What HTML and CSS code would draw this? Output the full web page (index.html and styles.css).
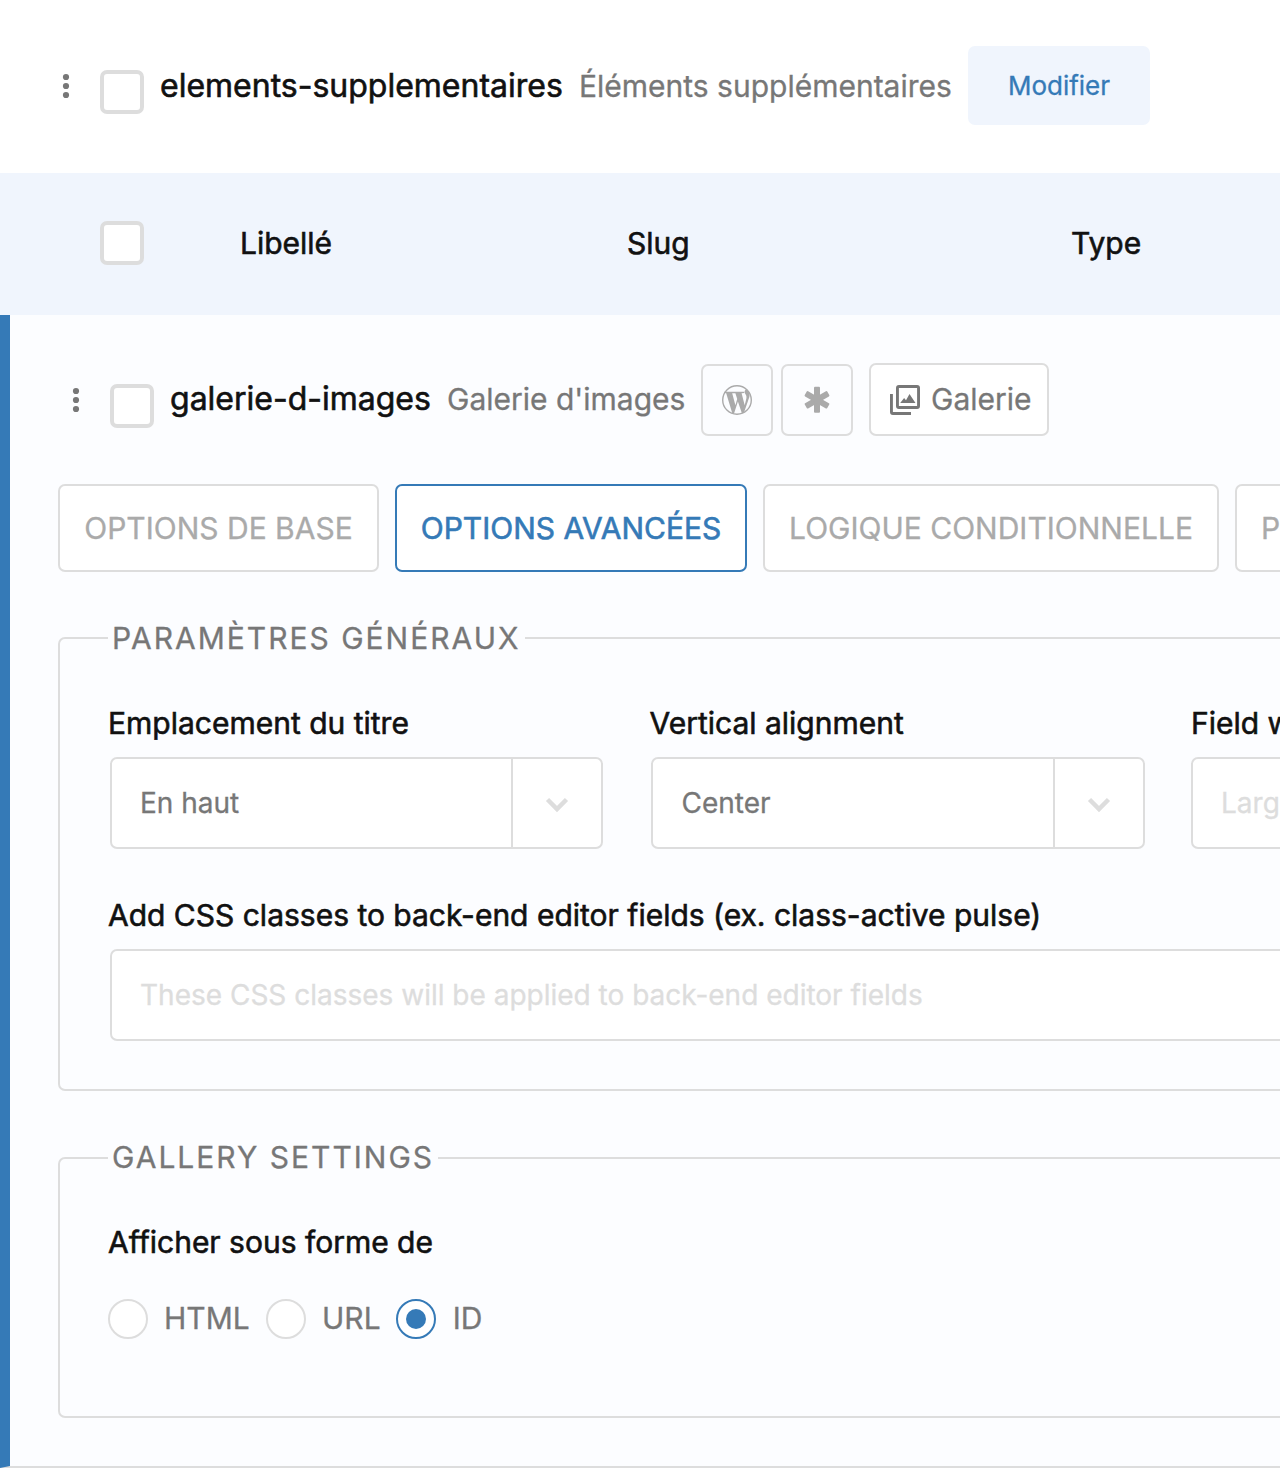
FILE: index.html
```html
<!DOCTYPE html>
<html lang="fr">
<head>
<meta charset="utf-8">
<title>Champs personnalisés</title>
<link rel="stylesheet" href="styles.css">
</head>
<body>
<main class="page">
  <header class="row group-row">
    <svg class="handle" viewBox="0 0 8 26"><circle cx="4" cy="4" r="3.1"/><circle cx="4" cy="13" r="3.1"/><circle cx="4" cy="22" r="3.1"/></svg>
    <span class="checkbox"></span>
    <strong class="name name-group">elements-supplementaires</strong>
    <span class="label label-group">Éléments supplémentaires</span>
    <button class="edit">Modifier</button>
  </header>

  <div class="columns">
    <span class="checkbox"></span>
    <span class="col col-label">Libellé</span>
    <span class="col col-slug">Slug</span>
    <span class="col">Type</span>
  </div>

  <section class="field">
    <div class="row field-row">
      <svg class="handle" viewBox="0 0 8 26"><circle cx="4" cy="4" r="3.1"/><circle cx="4" cy="13" r="3.1"/><circle cx="4" cy="22" r="3.1"/></svg>
      <span class="checkbox"></span>
      <strong class="name name-field">galerie-d-images</strong>
      <span class="label label-field">Galerie d'images</span>
      <span class="chip">
        <svg width="30" height="30" viewBox="0 0 30 30" fill="currentColor"><circle cx="15" cy="15" r="14.3" fill="none" stroke="currentColor" stroke-width="1.4"/><path d="M2.4 6.7H12.8V7.9L10.2 8.3 13.4 20.3 15.2 14 13.4 8.3 11.8 7.9V6.7H22.2V7.9L19.6 8.3 22.7 20.3 24.3 13.8C24.9 11.3 24 10 23.2 8.8 22 6.8 22.8 4.6 25 4.6 26.2 5.6 27.6 8.4 27.6 10.2 27.6 12 26.6 14 26 16L21.8 28H19.8L15.9 16.6 12.2 28H10.2L4.2 8.3 2.4 7.9Z"/></svg>
      </span>
      <span class="chip chip-star">
        <svg width="30" height="30" viewBox="0 0 30 30" fill="currentColor"><rect x="12" y="1.8" width="6" height="26" rx="1"/><rect x="12" y="1.8" width="6" height="26" rx="1" transform="rotate(60 15 14.8)"/><rect x="12" y="1.8" width="6" height="26" rx="1" transform="rotate(-60 15 14.8)"/></svg>
      </span>
      <span class="type">
        <svg width="30" height="30" viewBox="0 0 30 30" fill="none" stroke="currentColor" stroke-width="2.9"><rect x="7.45" y="1.45" width="21.1" height="21.1" rx="1.5"/><path d="M1.45 9V27.1Q1.45 28.55 2.9 28.55H21"/><path d="M10.2 17.9l3.9-4.8 1.9 2.2 3.5-6.3 6 8.9z" fill="currentColor" stroke="none"/></svg>
        <span class="type-name">Galerie</span>
      </span>
    </div>

    <nav class="tabs">
      <button class="tab tab-1">OPTIONS DE BASE</button>
      <button class="tab tab-2 active">OPTIONS AVANCÉES</button>
      <button class="tab tab-3">LOGIQUE CONDITIONNELLE</button>
      <button class="tab tab-4">PERMISSIONS</button>
    </nav>

    <fieldset class="panel general">
      <legend class="legend-general">PARAMÈTRES GÉNÉRAUX</legend>
      <div class="grid">
        <div class="cell">
          <span class="title">Emplacement du titre</span>
          <div class="control"><span class="value">En haut</span><span class="arrow"><svg width="24" height="18" viewBox="0 0 24 18"><path d="M2.5 4.5l9.5 9.5 9.5-9.5"/></svg></span></div>
        </div>
        <div class="cell cell-align">
          <span class="title">Vertical alignment</span>
          <div class="control"><span class="value">Center</span><span class="arrow"><svg width="24" height="18" viewBox="0 0 24 18"><path d="M2.5 4.5l9.5 9.5 9.5-9.5"/></svg></span></div>
        </div>
        <div class="cell cell-width">
          <span class="title">Field width</span>
          <div class="control"><span class="value hint">Largeur</span></div>
        </div>
      </div>
      <div class="cell css-cell">
        <span class="title">Add CSS classes to back-end editor fields (ex. class-active pulse)</span>
        <div class="control"><span class="value hint">These CSS classes will be applied to back-end editor fields</span></div>
      </div>
    </fieldset>

    <fieldset class="panel gallery">
      <legend class="legend-gallery">GALLERY SETTINGS</legend>
      <span class="title">Afficher sous forme de</span>
      <div class="radios">
        <label class="option option-html"><span class="radio"></span><span class="option-name">HTML</span></label>
        <label class="option option-url"><span class="radio"></span><span class="option-name">URL</span></label>
        <label class="option"><span class="radio checked"></span><span class="option-name">ID</span></label>
      </div>
    </fieldset>
  </section>
</main>
</body>
</html>
```
FILE: styles.css
```css
* { box-sizing: border-box; }
body {
  margin: 0;
  background: #fff;
  color: #777;
  font: 30px/38px Inter, "Liberation Sans", sans-serif;
  -webkit-text-stroke: .3px currentColor;
}
.page { width: 1280px; height: 1470px; overflow: hidden; }
svg { display: block; flex: none; }
button { font: inherit; margin: 0; }

.row { display: flex; align-items: center; white-space: nowrap; }
.group-row { height: 173px; padding: 0 0 2px 62px; }
.handle { width: 8px; height: 26px; fill: #777; }
.checkbox {
  flex: none;
  width: 44px;
  height: 44px;
  border: 4px solid #ddd;
  border-radius: 7px;
  background: #fff;
}
.row .checkbox { margin: 12px 16px 0 30px; }
.name, .col, .title {
  color: #111;
  font-weight: 400;
  -webkit-text-stroke: .6px #111;
}
.name { font-size: 32px; }
.name-group { width: 419px; }
.name-field { width: 277px; }
.label-group { width: 389px; }
.label-field { width: 254px; }
.field-row .name, .field-row .label, .type-name { padding-bottom: 2px; }
.edit {
  width: 182px;
  height: 79px;
  border: 0;
  border-radius: 7px;
  background: #f0f5fd;
  color: #357ab7;
  font-size: 26px;
}

.columns {
  display: flex;
  align-items: center;
  height: 142px;
  padding: 0 0 2px 100px;
  background: #f0f5fd;
}
.col-label { width: 387px; margin-left: 96px; }
.col-slug { width: 444px; }

.field {
  height: 1153px;
  border-left: 10px solid #357ab7;
  border-bottom: 2px solid #ddd;
  background: #fcfdff;
}
.field-row { height: 169px; padding-left: 62px; }
.chip {
  display: grid;
  place-items: center;
  flex: none;
  width: 72px;
  height: 72px;
  border: 2px solid #ddd;
  border-radius: 7px;
  color: #aaa;
}
.chip-star { margin: 0 16px 0 8px; }
.type {
  display: flex;
  align-items: center;
  gap: 11px;
  flex: none;
  width: 180px;
  height: 73px;
  padding-left: 19px;
  border: 2px solid #ddd;
  border-radius: 7px;
  background: #fff;
}

.tabs { display: flex; gap: 16px; padding-left: 48px; white-space: nowrap; }
.tab {
  flex: none;
  height: 88px;
  padding: 0;
  border: 2px solid #ddd;
  border-radius: 7px;
  background: #fff;
  color: #aaa;
}
.tab-1 { width: 321px; }
.tab-2 { width: 352px; }
.tab-3 { width: 456px; }
.tab-4 { width: 260px; padding-left: 24px; text-align: left; }
.active {
  border-color: #357ab7;
  color: #357ab7;
  -webkit-text-stroke: .6px #357ab7;
}

.panel {
  width: 1700px;
  margin: 0 0 0 48px;
  padding: 0 48px;
  border: 2px solid #ddd;
  border-radius: 7px;
}
.panel legend { height: 38px; padding: 0 4px; letter-spacing: 2px; white-space: nowrap; }
.general { height: 472px; margin-top: 47px; }
.gallery { height: 279px; margin-top: 48px; }
.legend-general { width: 417px; }
.panel .legend-gallery { width: 330px; line-height: 36px; }
.grid { display: grid; grid-template-columns: 541px 542px 541px; padding-top: 47px; }
.title { display: block; white-space: nowrap; }
.control {
  display: flex;
  align-items: center;
  width: 493px;
  height: 92px;
  margin: 15px 0 0 2px;
  padding-left: 28px;
  border: 2px solid #ddd;
  border-radius: 7px;
  background: #fff;
  font-size: 28px;
  white-space: nowrap;
}
.cell-align .title { padding-left: .5px; }
.cell-align .control { width: 494px; padding-left: 28.5px; }
.cell-width .control { margin-left: 0; }
.value { flex: 1; }
.hint { color: #ddd; }
.arrow {
  display: grid;
  place-items: center;
  width: 90px;
  height: 88px;
  padding-top: 1px;
  border-left: 2px solid #ddd;
}
.arrow path { fill: none; stroke: #ddd; stroke-width: 4.5; }
.css-cell { padding-top: 47px; }
.css-cell .control { width: 1580px; }

.gallery > .title { padding-top: 46px; }
.radios { display: flex; padding-top: 38px; }
.option { display: flex; align-items: center; gap: 16px; }
.option:last-child { gap: 16.7px; }
.option-name { padding-bottom: 2px; }
.option-html { width: 158px; }
.option-url { width: 130px; }
.radio {
  display: grid;
  place-items: center;
  width: 40px;
  height: 40px;
  border: 2px solid #ddd;
  border-radius: 50%;
  background: #fff;
}
.checked { border-color: #357ab7; }
.checked::after { content: ""; width: 20px; height: 20px; border-radius: 50%; background: #357ab7; }
```
